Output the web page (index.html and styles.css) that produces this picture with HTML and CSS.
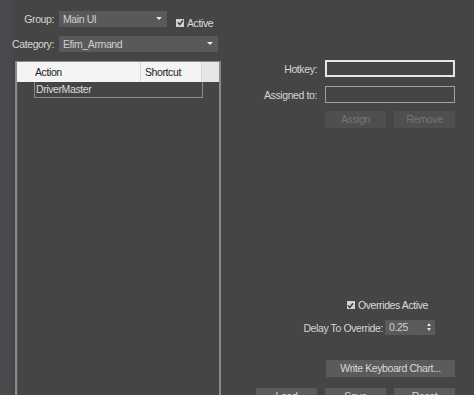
FILE: index.html
```html
<!DOCTYPE html>
<html lang="en">
<head>
    <meta charset="UTF-8">
    <meta name="viewport" content="width=device-width, initial-scale=1.0">
    <title>Hotkey Editor</title>
    <link rel="stylesheet" href="styles.css">
</head>

<body>
    <div class="window">
        <div class="left">
            <div class="row">
                <label class="lbl">Group:</label>
                <div class="drop drop_group">Main UI<span class="arrow"></span></div>
                <div class="check check_active">
                    <span class="box"><svg width="7" height="7" viewBox="0 0 7 7"><path d="M1 3.6 L2.8 5.4 L6 1.4" fill="none" stroke="#333" stroke-width="1.4"/></svg></span>Active
                </div>
            </div>
            <div class="row row2">
                <label class="lbl">Category:</label>
                <div class="drop drop_cat">Efim_Armand<span class="arrow"></span></div>
            </div>
            <div class="list">
                <div class="list_head">
                    <div class="col_action">Action</div>
                    <div class="col_short">Shortcut</div>
                    <div class="col_rest"></div>
                </div>
                <div class="list_body">
                    <div class="item current">DriverMaster</div>
                </div>
            </div>
        </div>

        <div class="right">
            <div class="field field_hotkey">
                <label>Hotkey:</label>
                <div class="input focus"></div>
            </div>
            <div class="field field_assigned">
                <label>Assigned to:</label>
                <div class="input"></div>
            </div>
            <div class="btns btns_assign">
                <div class="btn disabled">Assign</div>
                <div class="btn disabled">Remove</div>
            </div>

            <div class="check check_override">
                <span class="box"><svg width="7" height="7" viewBox="0 0 7 7"><path d="M1 3.6 L2.8 5.4 L6 1.4" fill="none" stroke="#333" stroke-width="1.4"/></svg></span>Overrides Active
            </div>
            <div class="field field_delay">
                <label>Delay To Override:</label>
                <div class="spin">0.25<span class="spin_arrows"><i class="up"></i><i class="down"></i></span></div>
            </div>

            <div class="btn btn_chart">Write Keyboard Chart...</div>
            <div class="btns btns_bottom">
                <div class="btn">Load</div>
                <div class="btn">Save</div>
                <div class="btn">Reset</div>
            </div>
        </div>
    </div>
</body>
</html>
```

FILE: styles.css
```css
* {
    margin: 0;
    padding: 0;
    box-sizing: border-box;
}

body {
    width: 474px;
    height: 395px;
    overflow: hidden;
    background: linear-gradient(to right, #4b4c50 0, #48494c 12px, #454545 14px);
    font-family: "Liberation Sans", Arial, sans-serif;
    font-size: 10.5px;
    letter-spacing: -0.4px;
    color: #d6d6d6;
}

.window {
    display: flex;
    height: 395px;
}

/* 左边 */
.left {
    width: 221px;
    padding-top: 11px;
    display: flex;
    flex-direction: column;
}

.row {
    display: flex;
    align-items: center;
    height: 16px;
}

.row2 {
    margin-top: 9px;
}

.lbl {
    width: 54px;
    text-align: right;
    margin-right: 5px;
}

.drop {
    position: relative;
    height: 16px;
    line-height: 16px;
    padding-left: 4px;
    background-color: #595959;
    color: #cfcfcf;
}

.drop_group {
    width: 108px;
}

.drop_cat {
    width: 159px;
}

.arrow {
    position: absolute;
    right: 5px;
    top: 6px;
    border-left: 3px solid transparent;
    border-right: 3px solid transparent;
    border-top: 3px solid #e8e8e8;
}

.check {
    display: flex;
    align-items: center;
    color: #dcdcdc;
}

.box {
    width: 8px;
    height: 8px;
    margin-right: 3px;
    background-color: #cfcfcf;
    display: flex;
    align-items: center;
    justify-content: center;
}

.check_active {
    margin-left: 9px;
    margin-top: 7px;
}

.list {
    margin-top: 9px;
    margin-left: 15px;
    flex: 1;
    border-left: 2px solid #8a8a8a;
    border-right: 2px solid #8a8a8a;
    border-top: 1px solid #8a8a8a;
    background-color: #454545;
}

.list_head {
    display: flex;
    height: 20px;
    line-height: 20px;
    background-color: #f4f4f4;
    color: #222;
}

.col_action {
    width: 124px;
    padding-left: 18px;
    border-right: 1px solid #d8d8d8;
}

.col_short {
    width: 61px;
    padding-left: 4px;
    border-right: 1px solid #d8d8d8;
}

.col_rest {
    flex: 1;
    background-color: #e6e6e6;
}

.list_body {
    padding-left: 16px;
    border-left: 1px solid #555;
    height: 100%;
}

.item {
    width: 169px;
    height: 16px;
    line-height: 14px;
    padding-left: 1px;
    color: #dcdcdc;
}

.item.current {
    border: 1px solid #8c8c8c;
    border-top: 0;
}

/* 右边 */
.right {
    flex: 1;
    padding-right: 19px;
    display: flex;
    flex-direction: column;
    align-items: flex-end;
}

.field {
    display: flex;
    align-items: center;
}

.field label {
    margin-right: 8px;
}

.field_hotkey {
    margin-top: 60px;
}

.field_assigned {
    margin-top: 9px;
}

.input {
    width: 130px;
    height: 17px;
    border: 1px solid #a2a2a2;
    background-color: #444;
}

.input.focus {
    border: 2px solid #e6e6e6;
}

.btns {
    display: flex;
    gap: 8px;
}

.btns_assign {
    margin-top: 8px;
}

.btn {
    width: 61px;
    height: 17px;
    line-height: 17px;
    text-align: center;
    background-color: #5b5b5b;
    color: #d8d8d8;
}

.btn.disabled {
    background-color: #4f4f4f;
    color: #747474;
}

.check_override {
    margin-top: 171px;
    margin-right: 27px;
}

.field_delay {
    margin-top: 9px;
    margin-right: 20px;
}

.field_delay label {
    margin-right: 2px;
}

.spin {
    position: relative;
    width: 50px;
    height: 15px;
    line-height: 15px;
    padding-left: 4px;
    background-color: #5a5a5a;
    color: #d0d0d0;
}

.spin_arrows {
    position: absolute;
    right: 4px;
    top: 3px;
}

.spin_arrows i {
    display: block;
    border-left: 2px solid transparent;
    border-right: 2px solid transparent;
}

.spin_arrows .up {
    border-bottom: 3px solid #e0e0e0;
    margin-bottom: 2px;
}

.spin_arrows .down {
    border-top: 3px solid #e0e0e0;
}

.btn_chart {
    width: 129px;
    margin-top: 25px;
}

.btns_bottom {
    margin-top: 11px;
}
```
